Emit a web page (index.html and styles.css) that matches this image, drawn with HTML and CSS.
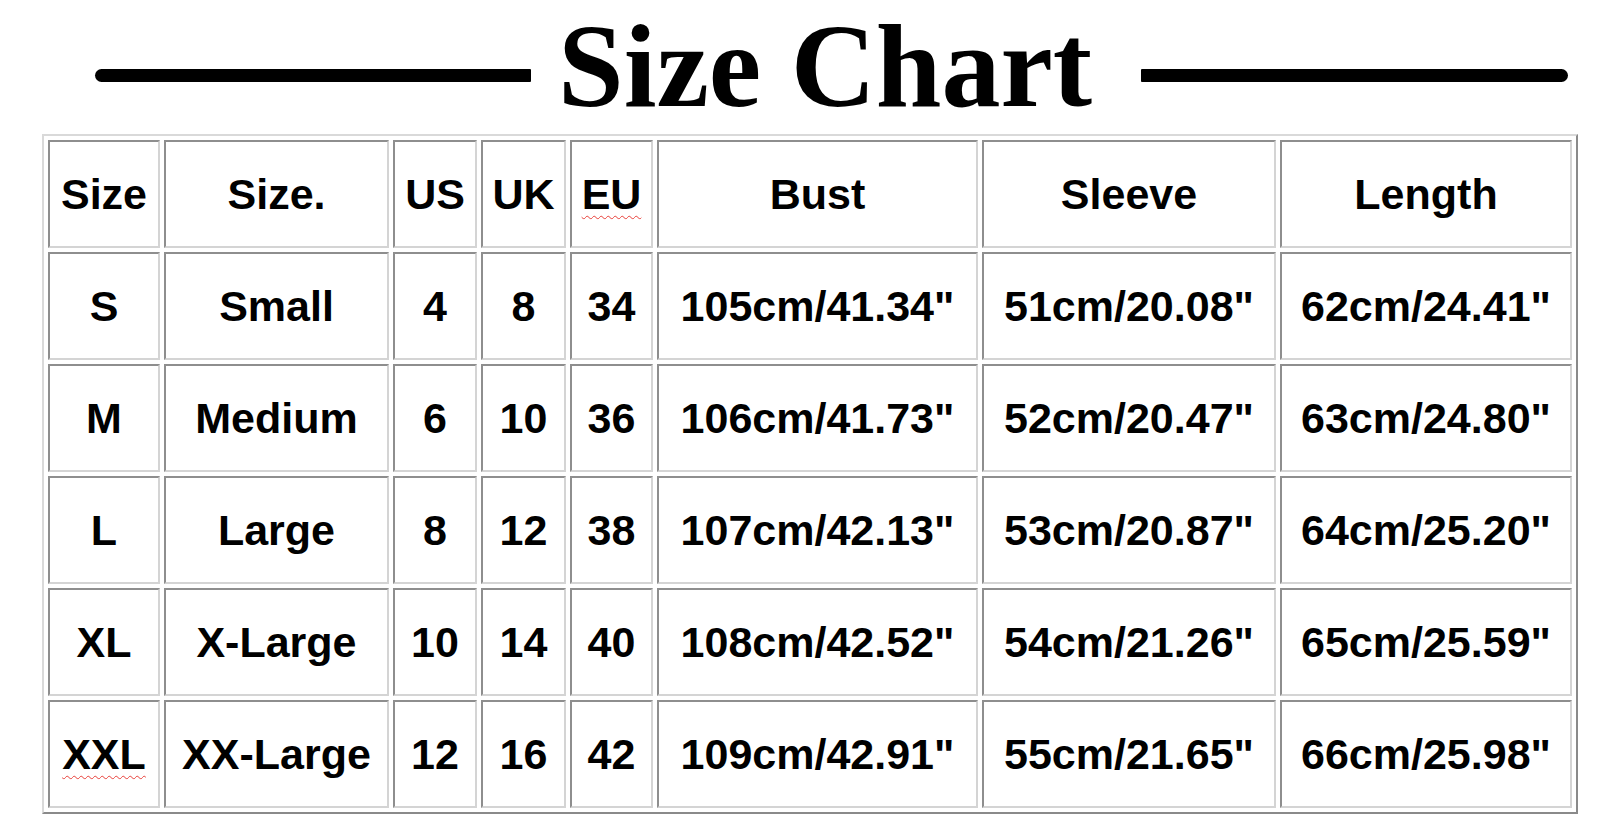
FILE: index.html
```html
<!DOCTYPE html>
<html lang="en">
<head>
<meta charset="utf-8">
<title>Size Chart</title>
<link rel="stylesheet" href="styles.css">
</head>
<body>
<div class="page">
  <header class="title-row">
    <span class="rule rule-left"></span>
    <h1 class="title">Size Chart</h1>
    <span class="rule rule-right"></span>
  </header>
  <table class="chart">
    <colgroup>
      <col class="c-size">
      <col class="c-name">
      <col class="c-us">
      <col class="c-uk">
      <col class="c-eu">
      <col class="c-bust">
      <col class="c-sleeve">
      <col class="c-length">
    </colgroup>
    <thead>
      <tr>
        <th>Size</th>
        <th>Size.</th>
        <th>US</th>
        <th>UK</th>
        <th><span class="spell">EU</span></th>
        <th>Bust</th>
        <th>Sleeve</th>
        <th>Length</th>
      </tr>
    </thead>
    <tbody>
      <tr>
        <td>S</td><td>Small</td><td>4</td><td>8</td><td>34</td>
        <td>105cm/41.34"</td><td>51cm/20.08"</td><td>62cm/24.41"</td>
      </tr>
      <tr>
        <td>M</td><td>Medium</td><td>6</td><td>10</td><td>36</td>
        <td>106cm/41.73"</td><td>52cm/20.47"</td><td>63cm/24.80"</td>
      </tr>
      <tr>
        <td>L</td><td>Large</td><td>8</td><td>12</td><td>38</td>
        <td>107cm/42.13"</td><td>53cm/20.87"</td><td>64cm/25.20"</td>
      </tr>
      <tr>
        <td>XL</td><td>X-Large</td><td>10</td><td>14</td><td>40</td>
        <td>108cm/42.52"</td><td>54cm/21.26"</td><td>65cm/25.59"</td>
      </tr>
      <tr>
        <td><span class="spell">XXL</span></td><td>XX-Large</td><td>12</td><td>16</td><td>42</td>
        <td>109cm/42.91"</td><td>55cm/21.65"</td><td>66cm/25.98"</td>
      </tr>
    </tbody>
  </table>
</div>
</body>
</html>
```

FILE: styles.css
```css
html, body {
  margin: 0;
  padding: 0;
  background: #ffffff;
}

.page {
  width: 1600px;
  height: 834px;
  background: #ffffff;
}

.title-row {
  display: flex;
  align-items: flex-start;
  height: 134px;
  padding-left: 95px;
  padding-right: 32px;
  box-sizing: border-box;
}

.rule {
  display: block;
  flex: none;
  height: 13px;
  margin-top: 69px;
  background: #000000;
}

.rule-left {
  width: 436px;
  border-radius: 7px 1px 1px 7px;
}

.rule-right {
  width: 427px;
  margin-left: auto;
  border-radius: 1px 7px 7px 1px;
}

.title {
  flex: none;
  margin: 8px 0 0 27px;
  font-family: "Liberation Serif", "Times New Roman", serif;
  font-weight: bold;
  font-size: 118px;
  line-height: 118px;
  color: #000000;
  white-space: nowrap;
}

.chart {
  margin-left: 42px;
  width: 1536px;
  table-layout: fixed;
  border-collapse: separate;
  border-spacing: 4px;
  border: 2px solid;
  border-color: #d9d9d9 #8a8a8a #8a8a8a #d9d9d9;
  font-family: "Liberation Sans", Arial, sans-serif;
  font-weight: bold;
  font-size: 43px;
  color: #000000;
}

.c-size { width: 112px; }
.c-name { width: 225px; }
.c-us { width: 84px; }
.c-uk { width: 85px; }
.c-eu { width: 83px; }
.c-bust { width: 321px; }
.c-sleeve { width: 294px; }
.c-length { width: 292px; }

.chart th,
.chart td {
  box-sizing: border-box;
  height: 108px;
  padding: 0;
  text-align: center;
  vertical-align: middle;
  font-weight: bold;
  white-space: nowrap;
  border: 2px solid;
  border-color: #8e8e8e #d4d4d4 #d4d4d4 #8e8e8e;
  line-height: 1;
}

.spell {
  text-decoration: underline wavy #e8403a;
  text-decoration-thickness: 1px;
  text-underline-offset: 6px;
}
```
